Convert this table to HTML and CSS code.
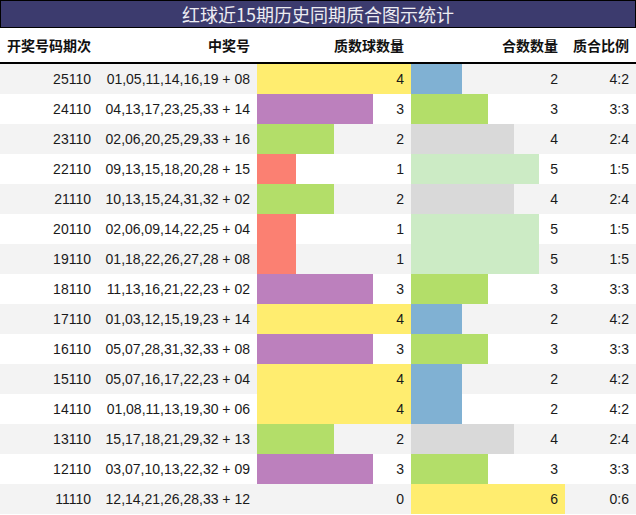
FILE: index.html
```html
<!DOCTYPE html>
<html lang="zh">
<head>
<meta charset="utf-8">
<title>红球近15期历史同期质合图示统计</title>
<link rel="stylesheet" href="styles.css">
</head>
<body>
<div class="chart">
  <div class="title">红球近15期历史同期质合图示统计</div>
  <div class="row head">
    <div class="cell">开奖号码期次</div>
    <div class="cell">中奖号</div>
    <div class="cell">质数球数量</div>
    <div class="cell">合数数量</div>
    <div class="cell">质合比例</div>
  </div>

  <div class="row odd">
    <div class="cell">25110</div><div class="cell">01,05,11,14,16,19 + 08</div>
    <div class="cell stack"><span class="bar c-yellow" style="width:100%"></span><span class="num">4</span></div>
    <div class="cell stack"><span class="bar c-blue" style="width:33.333%"></span><span class="num">2</span></div>
    <div class="cell">4:2</div>
  </div>
  <div class="row">
    <div class="cell">24110</div><div class="cell">04,13,17,23,25,33 + 14</div>
    <div class="cell stack"><span class="bar c-purple" style="width:75%"></span><span class="num">3</span></div>
    <div class="cell stack"><span class="bar c-green" style="width:50%"></span><span class="num">3</span></div>
    <div class="cell">3:3</div>
  </div>
  <div class="row odd">
    <div class="cell">23110</div><div class="cell">02,06,20,25,29,33 + 16</div>
    <div class="cell stack"><span class="bar c-green" style="width:50%"></span><span class="num">2</span></div>
    <div class="cell stack"><span class="bar c-grey" style="width:66.667%"></span><span class="num">4</span></div>
    <div class="cell">2:4</div>
  </div>
  <div class="row">
    <div class="cell">22110</div><div class="cell">09,13,15,18,20,28 + 15</div>
    <div class="cell stack"><span class="bar c-salmon" style="width:25%"></span><span class="num">1</span></div>
    <div class="cell stack"><span class="bar c-mint" style="width:83.333%"></span><span class="num">5</span></div>
    <div class="cell">1:5</div>
  </div>
  <div class="row odd">
    <div class="cell">21110</div><div class="cell">10,13,15,24,31,32 + 02</div>
    <div class="cell stack"><span class="bar c-green" style="width:50%"></span><span class="num">2</span></div>
    <div class="cell stack"><span class="bar c-grey" style="width:66.667%"></span><span class="num">4</span></div>
    <div class="cell">2:4</div>
  </div>
  <div class="row">
    <div class="cell">20110</div><div class="cell">02,06,09,14,22,25 + 04</div>
    <div class="cell stack"><span class="bar c-salmon" style="width:25%"></span><span class="num">1</span></div>
    <div class="cell stack"><span class="bar c-mint" style="width:83.333%"></span><span class="num">5</span></div>
    <div class="cell">1:5</div>
  </div>
  <div class="row odd">
    <div class="cell">19110</div><div class="cell">01,18,22,26,27,28 + 08</div>
    <div class="cell stack"><span class="bar c-salmon" style="width:25%"></span><span class="num">1</span></div>
    <div class="cell stack"><span class="bar c-mint" style="width:83.333%"></span><span class="num">5</span></div>
    <div class="cell">1:5</div>
  </div>
  <div class="row">
    <div class="cell">18110</div><div class="cell">11,13,16,21,22,23 + 02</div>
    <div class="cell stack"><span class="bar c-purple" style="width:75%"></span><span class="num">3</span></div>
    <div class="cell stack"><span class="bar c-green" style="width:50%"></span><span class="num">3</span></div>
    <div class="cell">3:3</div>
  </div>
  <div class="row odd">
    <div class="cell">17110</div><div class="cell">01,03,12,15,19,23 + 14</div>
    <div class="cell stack"><span class="bar c-yellow" style="width:100%"></span><span class="num">4</span></div>
    <div class="cell stack"><span class="bar c-blue" style="width:33.333%"></span><span class="num">2</span></div>
    <div class="cell">4:2</div>
  </div>
  <div class="row">
    <div class="cell">16110</div><div class="cell">05,07,28,31,32,33 + 08</div>
    <div class="cell stack"><span class="bar c-purple" style="width:75%"></span><span class="num">3</span></div>
    <div class="cell stack"><span class="bar c-green" style="width:50%"></span><span class="num">3</span></div>
    <div class="cell">3:3</div>
  </div>
  <div class="row odd">
    <div class="cell">15110</div><div class="cell">05,07,16,17,22,23 + 04</div>
    <div class="cell stack"><span class="bar c-yellow" style="width:100%"></span><span class="num">4</span></div>
    <div class="cell stack"><span class="bar c-blue" style="width:33.333%"></span><span class="num">2</span></div>
    <div class="cell">4:2</div>
  </div>
  <div class="row">
    <div class="cell">14110</div><div class="cell">01,08,11,13,19,30 + 06</div>
    <div class="cell stack"><span class="bar c-yellow" style="width:100%"></span><span class="num">4</span></div>
    <div class="cell stack"><span class="bar c-blue" style="width:33.333%"></span><span class="num">2</span></div>
    <div class="cell">4:2</div>
  </div>
  <div class="row odd">
    <div class="cell">13110</div><div class="cell">15,17,18,21,29,32 + 13</div>
    <div class="cell stack"><span class="bar c-green" style="width:50%"></span><span class="num">2</span></div>
    <div class="cell stack"><span class="bar c-grey" style="width:66.667%"></span><span class="num">4</span></div>
    <div class="cell">2:4</div>
  </div>
  <div class="row">
    <div class="cell">12110</div><div class="cell">03,07,10,13,22,32 + 09</div>
    <div class="cell stack"><span class="bar c-purple" style="width:75%"></span><span class="num">3</span></div>
    <div class="cell stack"><span class="bar c-green" style="width:50%"></span><span class="num">3</span></div>
    <div class="cell">3:3</div>
  </div>
  <div class="row odd">
    <div class="cell">11110</div><div class="cell">12,14,21,26,28,33 + 12</div>
    <div class="cell stack"><span class="bar" style="width:0%"></span><span class="num">0</span></div>
    <div class="cell stack"><span class="bar c-yellow" style="width:100%"></span><span class="num">6</span></div>
    <div class="cell">0:6</div>
  </div>
</div>
</body>
</html>
```

FILE: styles.css
```css
html, body {
  margin: 0;
  padding: 0;
  background: #ffffff;
}

.chart {
  width: 636px;
  font-family: "Liberation Sans", Arial, "Noto Sans CJK SC", sans-serif;
  font-size: 14px;
  color: #1a1a1a;
}

.title {
  height: 26px;
  line-height: 26px;
  border: 1px solid #000;
  background: #3c3b6e;
  color: #ececf2;
  text-align: center;
  font-family: "Noto Sans CJK SC", "Liberation Sans", sans-serif;
  font-size: 18px;
}

.row {
  display: grid;
  grid-template-columns: 98px 159px 154px 154px 71px;
  height: 30px;
  background: #ffffff;
}

.row.odd {
  background: #f3f3f3;
}

.row.head {
  height: 34px;
  border-bottom: 2px solid #000;
  background: #ffffff;
  font-family: "Noto Sans CJK SC", "Liberation Sans", sans-serif;
  font-weight: bold;
  font-size: 14px;
  color: #111;
}

.cell {
  display: flex;
  align-items: center;
  justify-content: flex-end;
  padding-right: 7px;
  white-space: nowrap;
}

.cell.stack {
  display: grid;
  grid-template-columns: 1fr;
  grid-template-rows: 1fr;
  padding-right: 0;
}

.stack .bar,
.stack .num {
  grid-area: 1 / 1;
}

.stack .bar {
  display: block;
  justify-self: start;
  align-self: stretch;
}

.stack .num {
  justify-self: end;
  align-self: center;
  padding-right: 7px;
}

.c-yellow { background: #ffed6f; }
.c-purple { background: #bc80bd; }
.c-green  { background: #b3de69; }
.c-salmon { background: #fb8072; }
.c-blue   { background: #80b1d3; }
.c-grey   { background: #d9d9d9; }
.c-mint   { background: #ccebc5; }
```
